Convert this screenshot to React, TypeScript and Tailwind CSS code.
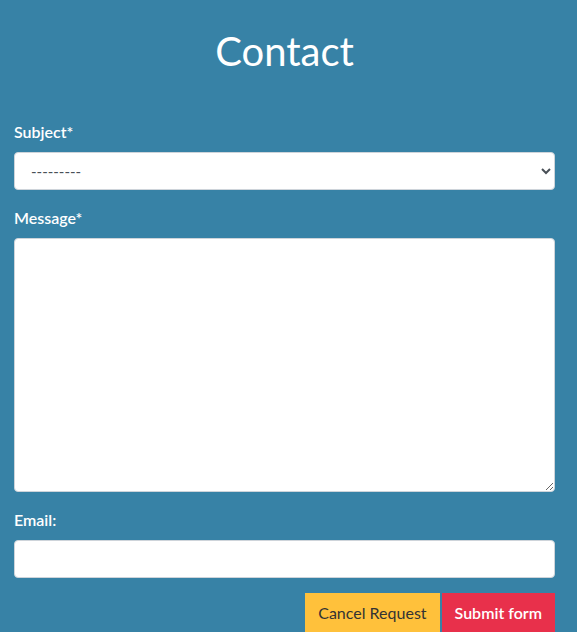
export default function App() {
  return (
    <div className="min-h-[632px] bg-[#3782a6] pl-[14px] pr-[22px] pt-[27px] pb-6 font-['Lato','Liberation_Sans',sans-serif]">
      <h1 className="text-center text-[40px] leading-[48px] text-white">Contact</h1>
      <form className="mt-[47px] flex flex-col" onSubmit={e => e.preventDefault()}>
        <label className="text-[16px] font-semibold leading-[20px] text-white">Subject*</label>
        <select className="mt-[10px] h-[38px] w-full rounded-[4px] border border-[#ced4da] bg-white px-[12px] text-[15px] text-[#495057] outline-none">
          <option>---------</option>
        </select>
        <label className="mt-[18px] text-[16px] font-semibold leading-[20px] text-white">Message*</label>
        <textarea className="mt-[10px] h-[254px] w-full rounded-[4px] border border-[#ced4da] bg-white px-3 py-2 text-[15px] outline-none" />
        <label className="mt-[18px] text-[16px] font-semibold leading-[20px] text-white">Email:</label>
        <input type="email" className="mt-[10px] h-[38px] w-full rounded-[4px] border border-[#ced4da] bg-white px-3 text-[15px] outline-none" />
        <div className="mt-[15px] flex justify-end gap-[2px]">
          <button type="button" className="h-[40px] bg-[#ffc13b] px-[13px] text-[16px] text-[#333333]">Cancel Request</button>
          <button type="submit" className="h-[40px] bg-[#e8304b] px-[13px] text-[16px] font-semibold text-white">Submit form</button>
        </div>
      </form>
    </div>
  );
}
